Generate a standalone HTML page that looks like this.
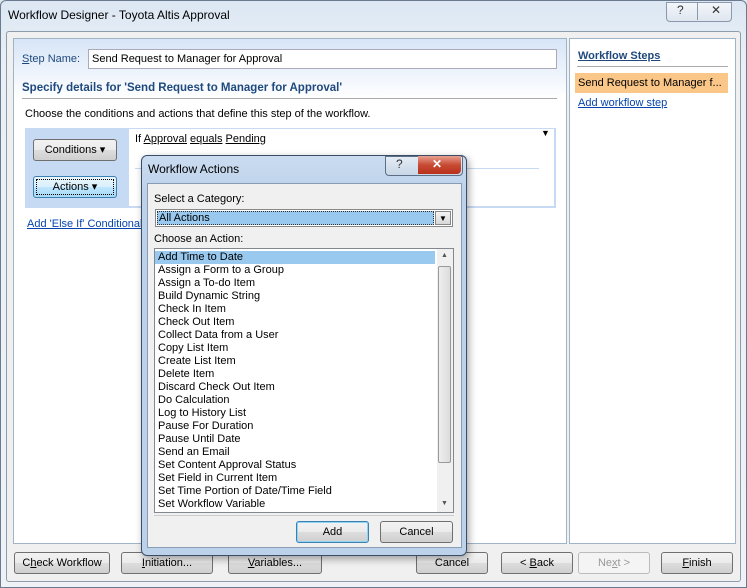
<html><head><style>
body{margin:0;width:747px;height:588px;background:#dfe6ee;font:11px "Liberation Sans",sans-serif;position:relative;overflow:hidden;color:#000}
.a{position:absolute;white-space:nowrap}
.btn{position:absolute;border:1px solid #707070;border-radius:3px;background:linear-gradient(#f2f2f2,#ebebeb 50%,#dddddd 51%,#cfcfcf);text-align:center;font-size:11px;line-height:20px;box-sizing:border-box;white-space:nowrap}
u{text-decoration:underline}
.lk{color:#0645ad;text-decoration:underline}
.it{height:13px;line-height:13px;padding-left:3px;font-size:11px}
</style></head><body>
<div class="a" style="left:0;top:0;width:747px;height:588px;background:linear-gradient(#dce7f3,#e9eff6 60px,#eef2f7);border:1px solid #6a7b90;box-sizing:border-box;border-radius:6px 6px 0 0"></div>
<div class="a" style="left:8px;top:8px;font-size:12px">Workflow Designer - Toyota Altis Approval</div>
<div class="a" style="left:666px;top:2px;width:64px;height:18px;border:1px solid #8a99ad;border-radius:0 0 4px 4px;background:linear-gradient(#f3f6fa,#dfe6ef)"></div>
<div class="a" style="left:677px;top:3px;font-size:12px;color:#333">?</div>
<div class="a" style="left:697px;top:2px;width:1px;height:18px;background:#8a99ad"></div>
<div class="a" style="left:711px;top:3px;font-size:12px;color:#333">✕</div>
<div class="a" style="left:6px;top:31px;width:735px;height:551px;background:#f0f0f0;border:1px solid #8e9bab;box-sizing:border-box;border-radius:3px"></div>
<div class="a" style="left:13px;top:38px;width:554px;height:506px;border:1px solid #a0b4c8;box-sizing:border-box;background:linear-gradient(#d7e5f7,#ffffff 60px)"></div>
<div class="a" style="left:569px;top:38px;width:167px;height:506px;border:1px solid #a0b4c8;box-sizing:border-box;background:#fff"></div>
<div class="a" style="left:22px;top:53px;color:#1f497d"><u>S</u>tep Name:</div>
<div class="a" style="left:88px;top:49px;width:469px;height:20px;border:1px solid #aab;background:#fff;box-sizing:border-box;padding:3px 3px;line-height:13px">Send Request to Manager for Approval</div>
<div class="a" style="left:22px;top:82px;font-weight:bold;color:#1f497d;font-size:11.5px">Specify details for 'Send Request to Manager for Approval'</div>
<div class="a" style="left:22px;top:98px;width:535px;height:1px;background:#aaa"></div>
<div class="a" style="left:25px;top:108px">Choose the conditions and actions that define this step of the workflow.</div>
<div class="a" style="left:25px;top:128px;width:531px;height:80px;background:#c7daf3"></div>
<div class="a" style="left:128px;top:128px;width:427px;height:79px;background:#fff;border:1px solid #c7daf3;box-sizing:border-box"></div>
<div class="a" style="left:135px;top:133px">If <u>Approval</u> <u>equals</u> <u>Pending</u></div>
<div class="a" style="left:541px;top:128px;font-size:9px">▼</div>
<div class="a" style="left:135px;top:168px;width:404px;height:1px;background:#c7daf3"></div>
<div class="btn" style="left:33px;top:139px;width:84px;height:22px">Conditions ▾</div>
<div class="btn" style="left:33px;top:176px;width:84px;height:22px;border-color:#3c7fb1;background:linear-gradient(#eaf6fd,#d9f0fc 50%,#bee6fd 51%,#a7d9f5);outline:1px dotted #000;outline-offset:-4px">Actions ▾</div>
<div class="a lk" style="left:27px;top:218px">Add 'Else If' Conditional</div>
<div class="a" style="left:578px;top:50px;font-weight:bold;color:#1f497d;text-decoration:underline">Workflow Steps</div>
<div class="a" style="left:577px;top:66px;width:151px;height:1px;background:#aaa"></div>
<div class="a" style="left:575px;top:73px;width:153px;height:20px;background:#fbc789;line-height:20px;padding-left:3px;box-sizing:border-box">Send Request to Manager f...</div>
<div class="a lk" style="left:578px;top:97px">Add workflow step</div>
<div class="btn" style="left:14px;top:552px;width:96px;height:22px">C<u>h</u>eck Workflow</div>
<div class="btn" style="left:121px;top:552px;width:92px;height:22px"><u>I</u>nitiation...</div>
<div class="btn" style="left:228px;top:552px;width:94px;height:22px"><u>V</u>ariables...</div>
<div class="btn" style="left:416px;top:552px;width:72px;height:22px">Cancel</div>
<div class="btn" style="left:501px;top:552px;width:72px;height:22px">&lt; <u>B</u>ack</div>
<div class="btn" style="left:578px;top:552px;width:72px;height:22px;color:#999;border-color:#bbb;background:#f4f4f4">Ne<u>x</u>t &gt;</div>
<div class="btn" style="left:661px;top:552px;width:72px;height:22px"><u>F</u>inish</div>
<div class="a" style="left:141px;top:155px;width:326px;height:401px;border:1px solid #3a4d66;border-radius:6px;box-sizing:border-box;background:linear-gradient(#cadcf0,#bcd1ea 40px,#bcd1ea);box-shadow:2px 3px 8px rgba(0,0,0,.35)"></div>
<div class="a" style="left:148px;top:162px;font-size:12px">Workflow Actions</div>
<div class="a" style="left:385px;top:156px;width:76px;height:18px;border:1px solid #5d6f86;border-radius:0 0 4px 4px;background:linear-gradient(#e4ecf5,#c8d6e6)"></div>
<div class="a" style="left:418px;top:156px;width:43px;height:18px;border-radius:0 0 4px 0;background:linear-gradient(#e8a090,#c74a33 50%,#b8301c)"></div>
<div class="a" style="left:396px;top:157px;font-size:12px;color:#333">?</div>
<div class="a" style="left:432px;top:157px;font-size:12px;color:#fff;font-weight:bold">✕</div>
<div class="a" style="left:147px;top:183px;width:315px;height:365px;background:#f0f0f0;border:1px solid #8a9cb3;box-sizing:border-box"></div>
<div class="a" style="left:154px;top:193px">Select a Category:</div>
<div class="a" style="left:155px;top:209px;width:298px;height:18px;border:1px solid #888;background:#fff;box-sizing:border-box"></div>
<div class="a" style="left:157px;top:211px;width:277px;height:14px;background:#99c9ef;border:1px dotted #333;box-sizing:border-box;line-height:12px;padding-left:1px;font-size:11px">All Actions</div>
<div class="a" style="left:435px;top:211px;width:16px;height:14px;border:1px solid #888;box-sizing:border-box;background:linear-gradient(#f4f4f4,#d8d8d8);font-size:8px;text-align:center;line-height:13px">▼</div>
<div class="a" style="left:154px;top:233px">Choose an Action:</div>
<div class="a" style="left:154px;top:248px;width:300px;height:265px;border:1px solid #828790;background:#fff;box-sizing:border-box"></div>
<div class="a" style="left:437px;top:249px;width:16px;height:263px;background:#f0f0f0"></div>
<div class="a" style="left:438px;top:266px;width:13px;height:197px;border:1px solid #999;border-radius:2px;box-sizing:border-box;background:linear-gradient(90deg,#eee,#dcdcdc)"></div>
<div class="a" style="left:441px;top:252px;font-size:7px;color:#555">▲</div>
<div class="a" style="left:441px;top:500px;font-size:7px;color:#555">▼</div>
<div class="a" style="left:155px;top:251px;width:280px">
<div class="it" style="background:#99c9ef">Add Time to Date</div>
<div class="it">Assign a Form to a Group</div><div class="it">Assign a To-do Item</div><div class="it">Build Dynamic String</div><div class="it">Check In Item</div><div class="it">Check Out Item</div><div class="it">Collect Data from a User</div><div class="it">Copy List Item</div><div class="it">Create List Item</div><div class="it">Delete Item</div><div class="it">Discard Check Out Item</div><div class="it">Do Calculation</div><div class="it">Log to History List</div><div class="it">Pause For Duration</div><div class="it">Pause Until Date</div><div class="it">Send an Email</div><div class="it">Set Content Approval Status</div><div class="it">Set Field in Current Item</div><div class="it">Set Time Portion of Date/Time Field</div><div class="it">Set Workflow Variable</div>
</div>
<div class="a" style="left:154px;top:515px;width:300px;height:1px;background:#ccc"></div>
<div class="btn" style="left:296px;top:521px;width:73px;height:22px;border-color:#3c7fb1;box-shadow:inset 0 0 0 1px #8fd3f5">Add</div>
<div class="btn" style="left:380px;top:521px;width:73px;height:22px">Cancel</div>
</body></html>
